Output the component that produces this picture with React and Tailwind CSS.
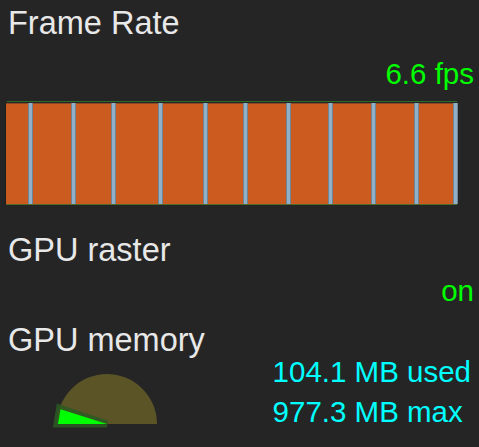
import React from 'react';

const SEPARATORS = [28, 71, 111, 158, 203, 243, 286, 328, 371, 414, 453];

const FrameChart = () => (
  <svg width="479" height="108" viewBox="0 0 479 108" className="block">
    {/* top guide line */}
    <rect x="7" y="1" width="450" height="1" fill="#2c6a2c" />
    {/* frame area */}
    <rect x="5" y="3" width="452" height="102" fill="#1c1c1c" />
    <rect x="6" y="3" width="450" height="1" fill="#8a4a26" />
    <rect x="6" y="4" width="450" height="100" fill="#cc5b1f" />
    <rect x="6" y="104" width="451" height="1" fill="#4e6a26" />
    {SEPARATORS.map((x) => (
      <g key={x}>
        <rect x={x} y="3" width="5" height="101" fill="#6f8494" />
        <rect x={x + 1} y="3" width="3" height="101" fill="#92afc8" />
      </g>
    ))}
  </svg>
);

const MemoryGauge = () => {
  const cx = 57;
  const cy = 68;
  const r = 50;
  const a = (161.5 * Math.PI) / 180;
  const ex = cx + r * Math.cos(a);
  const ey = cy - r * Math.sin(a);
  return (
    <svg width="120" height="80" viewBox="0 0 120 80" className="block">
      <path d={`M ${cx - r} ${cy} A ${r} ${r} 0 0 1 ${cx + r} ${cy} Z`} fill="#5b5427" />
      <path
        d={`M ${cx} ${cy} L ${cx - r} ${cy} L ${ex} ${ey} Z`}
        fill="none"
        stroke="#2b5a22"
        strokeOpacity="0.85"
        strokeWidth="7"
        strokeLinejoin="miter"
      />
      <path d={`M ${cx} ${cy} L ${cx - r + 1} ${cy} L ${ex + 1} ${ey + 1} Z`} fill="#00ff00" />
    </svg>
  );
};

export default function App() {
  return (
    <div
      className="w-[479px] h-[447px] overflow-hidden bg-[#252525] text-[#e8e8e8] flex flex-col"
      style={{ fontFamily: '"Liberation Sans", Arial, sans-serif' }}
    >
      <div className="pl-[8px] pt-[7px] text-[32.5px] leading-[32px]">Frame Rate</div>
      <div className="mt-[20px] pr-[5px] text-right text-[29.5px] leading-[29px] text-[#00ff00]">6.6 fps</div>
      <div className="mt-[12px]">
        <FrameChart />
      </div>

      <div className="mt-[26px] pl-[8px] text-[32.5px] leading-[32px]">GPU raster</div>
      <div className="mt-[10px] pr-[5px] text-right text-[29.5px] leading-[29px] text-[#00ff00]">on</div>

      <div className="mt-[19px] pl-[8px] text-[32.5px] leading-[32px]">GPU memory</div>
      <div className="flex items-start">
        <div className="ml-[50px]">
          <MemoryGauge />
        </div>
        <div className="ml-auto pr-[8px] mt-[-4px] text-[29.5px] leading-[40px] text-[#00ffff]">
          <div>104.1 MB used</div>
          <div>977.3 MB max</div>
        </div>
      </div>
    </div>
  );
}
